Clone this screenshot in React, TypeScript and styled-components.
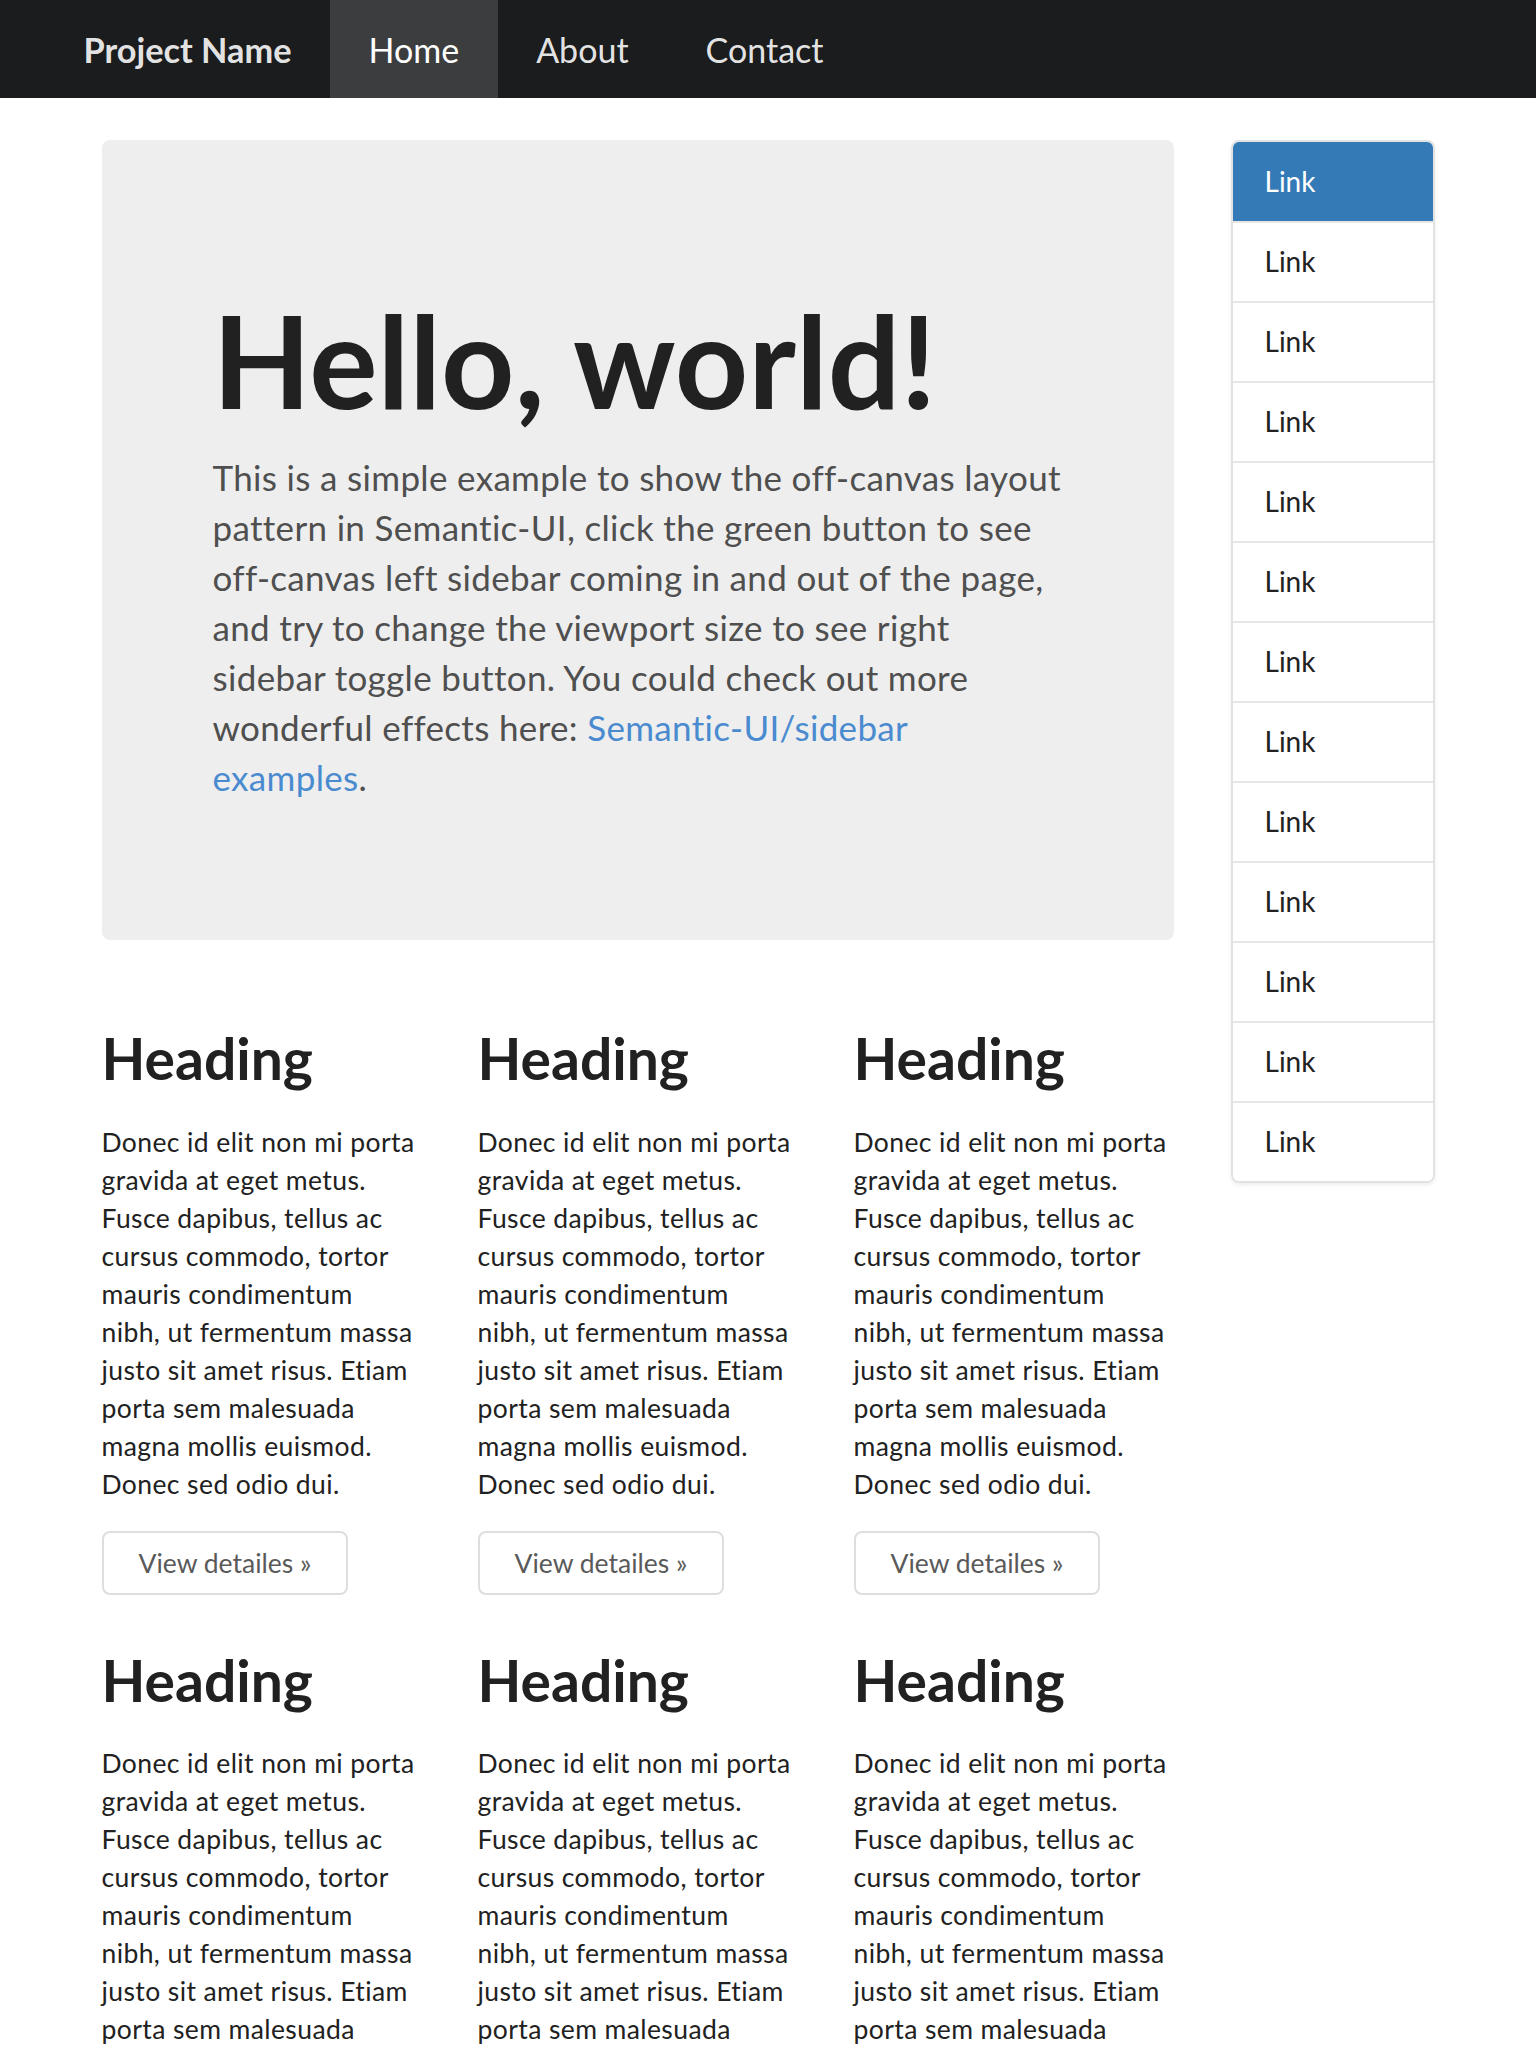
import React from "react";
import styled, { createGlobalStyle } from "styled-components";

const GlobalStyle = createGlobalStyle`
  html, body {
    margin: 0;
    padding: 0;
    background: #ffffff;
  }
  body {
    font-family: Lato, "Open Sans", "Liberation Sans", sans-serif;
    color: #212121;
  }
  * { box-sizing: border-box; }
`;

const NavBar = styled.nav`
  height: 98px;
  background: #1b1c1d;
  display: flex;
  align-items: stretch;
  padding-left: 45px;
`;

const NavItem = styled.a<{ $active?: boolean; $brand?: boolean }>`
  display: flex;
  align-items: center;
  padding: 0 38.5px;
  font-size: ${(p) => (p.$brand ? "34.3px" : "34px")};
  font-weight: ${(p) => (p.$brand ? 700 : 400)};
  color: ${(p) => (p.$active ? "#ffffff" : "rgba(255,255,255,0.9)")};
  background: ${(p) => (p.$active ? "#3c3d3f" : "transparent")};
  text-decoration: none;
  cursor: pointer;
`;

const Page = styled.div`
  width: 1333px;
  margin: 42px auto 0;
  display: flex;
  align-items: flex-start;
  gap: 57px;
`;

const Main = styled.main`
  width: 1072px;
  flex: none;
`;

const Jumbotron = styled.section`
  background: #eeeeee;
  border-radius: 8px;
  padding: 150px 107px 138px 111px;
`;

const HeroTitle = styled.h1`
  margin: 0;
  font-size: 128px;
  line-height: 1.1;
  font-weight: 700;
  color: #212121;
`;

const HeroText = styled.p`
  margin: 21px 0 0;
  font-size: 35px;
  letter-spacing: 0.33px;
  line-height: 50px;
  color: #4f4f4f;
`;

const HeroLink = styled.a`
  color: #4a8bd0;
  text-decoration: none;
`;

const Grid = styled.div`
  margin-top: 87px;
  display: grid;
  grid-template-columns: repeat(3, 315px);
  column-gap: 61px;
  row-gap: 54px;
`;

const Card = styled.div`
  display: flex;
  flex-direction: column;
  align-items: flex-start;
`;

const CardTitle = styled.h2`
  margin: 0;
  font-size: 57px;
  line-height: 63.8px;
  font-weight: 700;
  color: #212121;
`;

const CardText = styled.p`
  margin: 32px 0 0;
  font-size: 26.5px;
  letter-spacing: 0.4px;
  line-height: 38px;
  color: #212121;
`;

const DetailButton = styled.button`
  margin-top: 28px;
  height: 64px;
  padding: 0 35px;
  border: 2px solid #dedede;
  border-radius: 8px;
  background: #ffffff;
  color: #5a5a5a;
  font-family: Lato, "Open Sans", "Liberation Sans", sans-serif;
  font-size: 26.5px;
  cursor: pointer;
`;

const Sidebar = styled.aside`
  width: 204px;
  flex: none;
  border: 2px solid #e2e2e2;
  border-radius: 8px;
  overflow: hidden;
  box-shadow: 0 2px 4px rgba(0, 0, 0, 0.075);
  display: flex;
  flex-direction: column;
`;

const SideLink = styled.a<{ $active?: boolean }>`
  display: block;
  padding: 20px 32px;
  line-height: 39px;
  font-size: 28px;
  color: ${(p) => (p.$active ? "#ffffff" : "#212121")};
  background: ${(p) => (p.$active ? "#337ab7" : "#ffffff")};
  text-decoration: none;
  & + & {
    border-top: 2px solid #e6e6e6;
    padding-top: 19px;
  }
`;

const bodyText =
  "Donec id elit non mi porta gravida at eget metus. Fusce dapibus, tellus ac cursus commodo, tortor mauris condimentum nibh, ut fermentum massa justo sit amet risus. Etiam porta sem malesuada magna mollis euismod. Donec sed odio dui.";

export default function App() {
  const cards = [0, 1, 2, 3, 4, 5];
  const links = Array.from({ length: 13 }, (_, i) => i);
  return (
    <>
      <GlobalStyle />
      <NavBar>
        <NavItem $brand>Project Name</NavItem>
        <NavItem $active>Home</NavItem>
        <NavItem>About</NavItem>
        <NavItem>Contact</NavItem>
      </NavBar>
      <Page>
        <Main>
          <Jumbotron>
            <HeroTitle>Hello, world!</HeroTitle>
            <HeroText>
              This is a simple example to show the off-canvas layout pattern in
              Semantic-UI, click the green button to see off-canvas left sidebar
              coming in and out of the page, and try to change the viewport size
              to see right sidebar toggle button. You could check out more
              wonderful effects here:{" "}
              <HeroLink>Semantic-UI/sidebar examples</HeroLink>.
            </HeroText>
          </Jumbotron>
          <Grid>
            {cards.map((c) => (
              <Card key={c}>
                <CardTitle>Heading</CardTitle>
                <CardText>{bodyText}</CardText>
                <DetailButton>View detailes »</DetailButton>
              </Card>
            ))}
          </Grid>
        </Main>
        <Sidebar>
          {links.map((i) => (
            <SideLink key={i} $active={i === 0}>
              Link
            </SideLink>
          ))}
        </Sidebar>
      </Page>
    </>
  );
}
